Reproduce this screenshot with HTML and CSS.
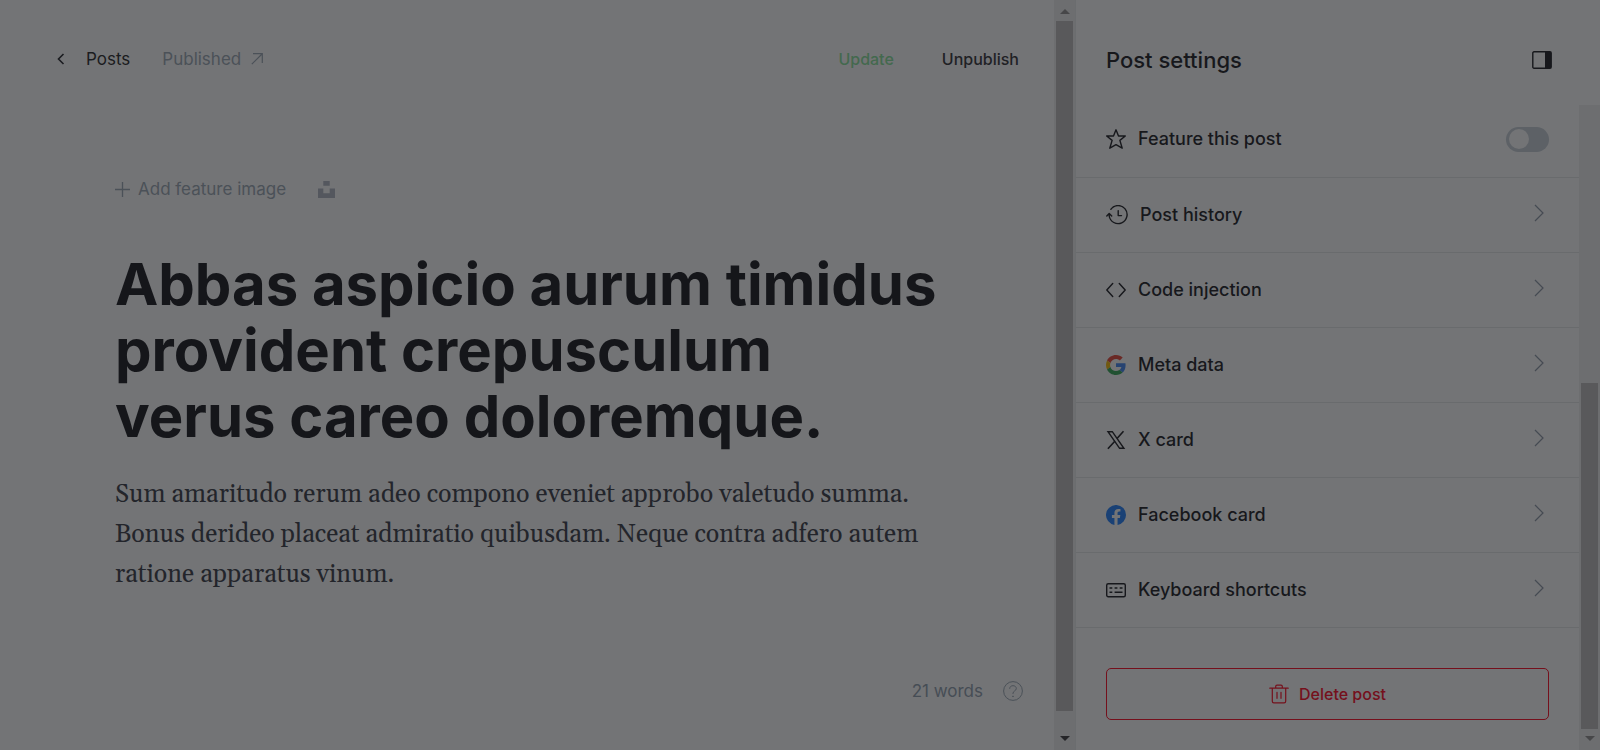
FILE: index.html
```html
<!DOCTYPE html>
<html lang="en">
<head>
<meta charset="utf-8">
<title>Post editor</title>
<link rel="stylesheet" href="styles.css">
</head>
<body>
<div class="app">
  <main class="editor">
    <header class="topbar">
      <a class="back" href="#"><svg width="9" height="14" viewBox="0 0 9 14"><path d="M7.500 2 2.500 7l5 5" fill="none" stroke="currentColor" stroke-width="1.600"/></svg>Posts</a>
      <a class="status" href="#">Published<svg width="12" height="12" viewBox="0 0 12 12"><path d="M.8 11.2 11 1M2 .7h9.300v9.300" fill="none" stroke="currentColor" stroke-width="1.200"/></svg></a>
      <div class="actions">
        <button class="update" type="button">Update</button>
        <button class="unpublish" type="button">Unpublish</button>
      </div>
    </header>
    <article class="content">
      <div class="feature">
        <button class="add" type="button"><svg width="15" height="15" viewBox="0 0 15 15"><path d="M7.500 0v15M0 7.500h15" stroke="currentColor" stroke-width="1.300"/></svg>Add feature image</button>
        <button class="unsplash" type="button" aria-label="Unsplash"><svg width="17" height="17" viewBox="0 0 17 17"><path d="M5.300 0h6.400v4.800H5.300zM0 7.500h5.300v4.800h6.400V7.500H17V17H0z" fill="currentColor"/></svg></button>
      </div>
      <h1 class="title">Abbas aspicio aurum timidus provident crepusculum verus careo doloremque.</h1>
      <p class="text">Sum amaritudo rerum adeo compono eveniet approbo valetudo summa. Bonus derideo placeat admiratio quibusdam. Neque contra adfero autem ratione apparatus vinum.</p>
    </article>
    <footer class="foot">
      <span>21 words</span>
      <button class="help" type="button" aria-label="Help"><svg width="20" height="20" viewBox="0 0 20 20" fill="none" stroke="currentColor" stroke-width="1"><circle cx="10" cy="10" r="9.400"/><path d="M6.700 7.800C6.700 5.900 8 4.700 10 4.700s3.300 1.200 3.300 2.900c0 2.200-3.300 2.400-3.300 4.700v.7"/><circle cx="10" cy="15.300" r=".4" fill="currentColor"/></svg></button>
    </footer>
  </main>
  <div class="scroll scroll-main" aria-hidden="true">
    <span class="arrow up"></span><span class="thumb"></span><span class="arrow down"></span>
  </div>
  <aside class="panel">
    <header class="panel-head">
      <h2>Post settings</h2>
      <button type="button" aria-label="Toggle settings"><svg width="20" height="18" viewBox="0 0 20 18"><rect x=".8" y=".8" width="18.400" height="16.400" rx="1.200" fill="none" stroke="currentColor" stroke-width="1.400"/><path d="M13 1h6v16h-6z" fill="currentColor"/></svg></button>
    </header>
    <div class="panel-body">
      <div class="panel-list">
        <div class="row feature-row">
          <svg class="icon" viewBox="0 0 20 20"><path d="M10 .8l2.500 6.200h6.800l-5.400 4.400 2.300 7.800-6.200-3.500-6.200 3.500 2.300-7.800L.7 7h6.800z" fill="none" stroke="currentColor" stroke-width="1.400" stroke-linejoin="round"/></svg>
          <label for="featured">Feature this post</label>
          <input class="toggle" id="featured" type="checkbox">
        </div>
        <button class="row" type="button">
          <svg class="icon wide" viewBox="0 0 22 20" fill="none" stroke="currentColor" stroke-width="1.400" stroke-linecap="round" stroke-linejoin="round"><path d="M4.800 4.300A9 9 0 1 1 3.200 11V8.800M.8 11 3.200 8.400 5.700 11M12.200 5.600v5h3.300"/></svg>
          <span>Post history</span><svg class="chev" viewBox="0 0 10 18"><path d="M1 1l8 8-8 8"/></svg>
        </button>
        <button class="row" type="button">
          <svg class="icon" viewBox="0 0 20 20"><path d="M6.700 3.500.8 10l5.900 6.500M13.300 3.500l5.900 6.500-5.900 6.500" fill="none" stroke="currentColor" stroke-width="1.400" stroke-linecap="round" stroke-linejoin="round"/></svg>
          <span>Code injection</span><svg class="chev" viewBox="0 0 10 18"><path d="M1 1l8 8-8 8"/></svg>
        </button>
        <button class="row" type="button">
          <svg class="icon" viewBox="0 0 48 48"><path fill="#6a2925" d="M24 9.500c3.540 0 6.710 1.220 9.210 3.600l6.850-6.850C35.900 2.380 30.470 0 24 0 14.620 0 6.510 5.380 2.560 13.220l7.980 6.190C12.430 13.720 17.740 9.500 24 9.500z"/><path fill="#274371" d="M46.980 24.550c0-1.570-.15-3.090-.38-4.550H24v9.020h12.940c-.58 2.960-2.260 5.480-4.780 7.180l7.730 6c4.510-4.180 7.090-10.360 7.090-17.650z"/><path fill="#715912" d="M10.530 28.590c-.48-1.450-.76-2.990-.76-4.590s.27-3.140.76-4.590l-7.980-6.190C.92 16.460 0 20.120 0 24s.92 7.540 2.560 10.780z"/><path fill="#215131" d="M24 48c6.480 0 11.930-2.130 15.890-5.810l-7.730-6c-2.150 1.450-4.920 2.300-8.160 2.300-6.260 0-11.570-4.220-13.470-9.910l-7.980 6.190C6.510 42.620 14.620 48 24 48z"/></svg>
          <span>Meta data</span><svg class="chev" viewBox="0 0 10 18"><path d="M1 1l8 8-8 8"/></svg>
        </button>
        <button class="row" type="button">
          <svg class="icon" viewBox="0 0 20 20" fill="none" stroke="currentColor"><path d="M2 1.700h4.300l11.600 16.600h-4.300z" stroke-width="1.400"/><path d="M17.500 1.200 11 8.500M8.800 11.200 1.900 18.800" stroke-width="1.600"/></svg>
          <span>X card</span><svg class="chev" viewBox="0 0 10 18"><path d="M1 1l8 8-8 8"/></svg>
        </button>
        <button class="row" type="button">
          <svg class="icon" viewBox="0 0 24 24"><path fill="#1a4175" d="M24 12a12 12 0 1 0-13.880 11.850v-8.380H7.080V12h3.040V9.360c0-3 1.790-4.670 4.530-4.670 1.310 0 2.690.24 2.690.24v2.950h-1.520c-1.490 0-1.950.93-1.950 1.870V12h3.320l-.53 3.470h-2.790v8.380A12 12 0 0 0 24 12z"/></svg>
          <span>Facebook card</span><svg class="chev" viewBox="0 0 10 18"><path d="M1 1l8 8-8 8"/></svg>
        </button>
        <button class="row" type="button">
          <svg class="icon" viewBox="0 0 20 20" fill="none" stroke="currentColor" stroke-width="1.400"><rect x=".7" y="3.700" width="18.600" height="13" rx="1.500"/><path d="M3.500 8h2.800M8.600 8h2.800M13.700 8h2.800M3.500 12.300h2.800M8.600 12.300h7.900"/></svg>
          <span>Keyboard shortcuts</span><svg class="chev" viewBox="0 0 10 18"><path d="M1 1l8 8-8 8"/></svg>
        </button>
        <button class="delete" type="button"><svg width="20" height="20" viewBox="0 0 20 20" fill="none" stroke="currentColor" stroke-width="1.200" stroke-linecap="round" stroke-linejoin="round"><path d="M.8 4.200h18.400M3.300 4.200v13c0 1 .6 1.700 1.600 1.700h10.200c1 0 1.600-.7 1.600-1.700v-13M6.700 4V2.500c0-.8.500-1.300 1.300-1.300h4c.8 0 1.300.5 1.300 1.300V4M8 8.300v6M12 8.300v6"/></svg>Delete post</button>
      </div>
      <div class="scroll scroll-panel" aria-hidden="true">
        <span class="thumb"></span><span class="arrow down"></span>
      </div>
    </div>
  </aside>
</div>
</body>
</html>
```
FILE: styles.css
```css
* { box-sizing: border-box; }
body {
  margin: 0;
  background: #737476;
  color: #17181c;
  font-family: Inter, "Liberation Sans", sans-serif;
  font-size: 17px;
  line-height: 24px;
}
button {
  border: 0;
  padding: 0;
  background: none;
  color: inherit;
  font: inherit;
}
a { color: inherit; text-decoration: none; }
svg { display: block; flex: none; }
h1, h2, p { margin: 0; }

.app { display: flex; height: 100vh; min-height: 640px; overflow: hidden; }
.editor { flex: 1; min-width: 0; display: flex; flex-direction: column; }

.topbar { display: flex; align-items: center; padding: 47px 35px 0 56px; }
.back { display: flex; align-items: center; gap: 21px; color: #1b1c20; }
.status { display: flex; align-items: center; gap: 10px; margin-left: 32px; color: #4b5158; }
.actions { display: flex; gap: 48px; margin-left: auto; font-size: 16px; font-weight: 500; }
.update { color: #43694e; }
.unpublish { color: #1f2125; }

.content { padding: 106px 110px 0 115px; }
.feature { display: flex; align-items: center; gap: 32px; color: #4b5158; }
.add { display: flex; align-items: center; gap: 8px; }
.unsplash { color: #54575e; }
.title { margin-top: 50px; font-size: 58px; line-height: 66px; font-weight: 700; color: #15161a; }
.text { margin-top: 26px; font-family: Georgia, Gelasio, "Liberation Serif", serif; font-size: 25px; line-height: 40px; color: #23252b; }

.foot { display: flex; align-items: center; justify-content: flex-end; gap: 20px; margin-top: auto; padding: 0 31px 47px; color: #464d55; }
.help { color: #4b5158; }

.scroll { display: flex; flex-direction: column; align-items: center; width: 21px; background: #6d6e70; }
.thumb { width: 17px; background: #59595b; }
.arrow { border: 5px solid transparent; }
.up { margin: 4px 0 7px; border-bottom-color: #474749; }
.down { margin-top: 7px; border-top-color: #474749; }
.scroll-main { border-right: 1px solid #6b6d6f; width: 22px; padding-bottom: 4px; }
.scroll-main .thumb { flex: 1; }
.scroll-main .down { margin-top: 25px; border-top-color: #252528; }
.scroll-panel { justify-content: flex-end; padding-bottom: 4px; }
.scroll-panel .thumb { height: 54%; }

.panel { width: 524px; display: flex; flex-direction: column; }
.panel-head { display: flex; align-items: center; justify-content: space-between; padding: 46px 48px 31px 30px; }
.panel-head h2 { font-size: 22px; line-height: 28px; font-weight: 500; }
.panel-body { flex: 1; display: flex; min-height: 0; }
.panel-list { flex: 1; min-width: 0; }
.row { display: flex; align-items: center; width: 100%; height: 75px; padding: 0 30px; border-bottom: 1px solid #696b6d; font-size: 18px; font-weight: 500; text-align: left; }
.feature-row { height: 73px; padding-bottom: 4px; }
.icon { width: 20px; height: 20px; margin-right: 12px; }
.wide { width: 22px; }
.chev { width: 10px; height: 18px; margin: 0 5px 5px auto; fill: none; stroke: #464b53; stroke-width: 1.2; }
.toggle { appearance: none; display: flex; align-items: center; width: 43px; height: 25px; margin: 0 0 0 auto; padding: 0 3px; border-radius: 13px; background: #5d6166; }
.toggle::before { content: ""; width: 20px; height: 20px; border-radius: 50%; background: #737476; }
.toggle:checked { justify-content: flex-end; }
.delete { display: flex; align-items: center; justify-content: center; gap: 10px; width: calc(100% - 60px); height: 52px; margin: 40px 30px 0; border: 1px solid #75101c; border-radius: 5px; color: #75101c; font-size: 16px; font-weight: 500; }
```
